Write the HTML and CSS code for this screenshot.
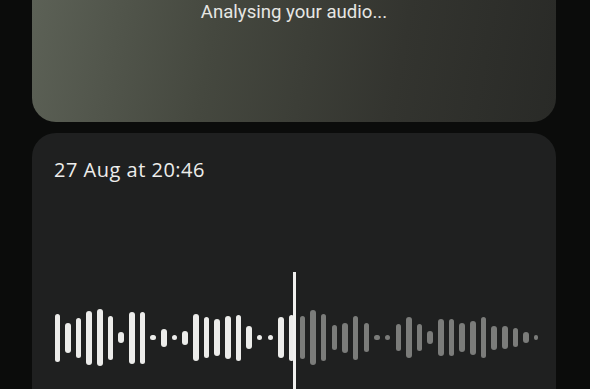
FILE: index.html
```html
<!DOCTYPE html>
<html lang="en">
<head>
<meta charset="UTF-8">
<meta name="viewport" content="width=device-width, initial-scale=1.0">
<title>Recorder</title>
<link rel="stylesheet" href="styles.css">
</head>
<body>

<div class="screen">
    <div class="status-card">
        <p class="status-text">Analysing your audio...</p>
    </div>

    <div class="recording-card">
        <h2 class="recording-date">27 Aug at 20:46</h2>
        <div class="wave" id="wave"></div>
        <div class="playhead"></div>
    </div>
</div>

<script>
var played = [48, 30, 40, 54, 57, 44, 11, 52, 52, 5, 18, 5, 14, 47, 41, 37, 43, 46, 23, 5, 5, 41, 46];
var upcoming = [43, 55, 47, 25, 30, 44, 29, 5, 5, 27, 41, 27, 13, 37, 37, 29, 34, 41, 24, 23, 19, 11, 5];

function addBars(heights, className) {
    var wave = document.getElementById("wave");
    heights.forEach(function (h) {
        var bar = document.createElement("span");
        bar.classList.add("bar", className);
        bar.style.height = h + "px";
        wave.appendChild(bar);
    });
}

addBars(played, "played");
addBars(upcoming, "upcoming");
wave.lastChild.classList.add("tail");
</script>

</body>
</html>
```

FILE: styles.css
```css
body {
    margin: 0;
    background-color: #0b0c0b;
    font-family: Roboto, "Noto Sans", sans-serif;
    overflow: hidden;
}
.screen {
    padding: 0 34px 0 32px;
    display: flex;
    flex-direction: column;
    gap: 11px;
}
.status-card {
    margin-top: -40px;
    height: 162px;
    padding-top: 40px;
    box-sizing: border-box;
    border-radius: 24px;
    background: linear-gradient(100deg, #5d6257 0%, #45483f 35%, #33342f 70%, #292a27 100%);
}
.status-text {
    margin: 0;
    text-align: center;
    color: #e6e6e3;
    font-size: 18.6px;
    line-height: 24px;
}
.recording-card {
    position: relative;
    height: 300px;
    border-radius: 24px;
    background-color: #1f2020;
}
.recording-date {
    margin: 0;
    padding: 24px 0 0 22px;
    color: #ededeb;
    font-family: "Open Sans", sans-serif;
    font-weight: 400;
    font-size: 20px;
    letter-spacing: 0.5px;
    line-height: 26px;
}
.wave {
    display: flex;
    align-items: center;
    gap: 5.17px;
    height: 60px;
    margin-top: 124.5px;
    padding-left: 22.5px;
}
.bar {
    width: 5.5px;
    border-radius: 3px;
    flex-shrink: 0;
}
.bar.played {
    background-color: #ececea;
}
.bar.upcoming {
    background-color: #7b7c7a;
}
.bar.tail {
    width: 3.5px;
}
.playhead {
    position: absolute;
    left: 261px;
    top: 139px;
    width: 3px;
    height: 200px;
    background-color: #f0f0ee;
}
```
